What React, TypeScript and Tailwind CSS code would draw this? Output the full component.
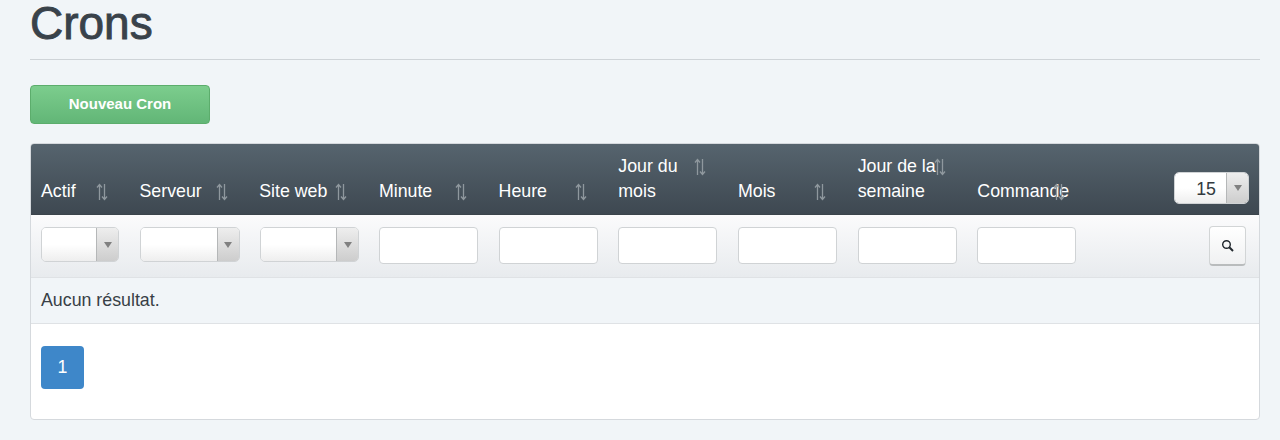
const columns = [
  { label: "Actif", select: "w-[78px]", first: true },
  { label: "Serveur", select: "w-[100px]" },
  { label: "Site web", select: "w-[99px] ml-[1px]" },
  { label: "Minute" },
  { label: "Heure" },
  { label: "Jour du mois", top: true },
  { label: "Mois" },
  { label: "Jour de la semaine", top: true },
  { label: "Commande" },
];

function SortIcon({ top, first }: { top?: boolean; first?: boolean }) {
  return (
    <svg
      className={`absolute ${first ? "left-[55px]" : "left-[76px]"} ${top ? "top-[14px]" : "top-[39px]"}`}
      width="12"
      height="18"
      viewBox="0 0 12 18"
      fill="none"
      stroke="#8f989e"
      strokeWidth="1.3"
    >
      <path d="M3.5 17V1.5M1 4.5L3.5 1.5L6 4.5" />
      <path d="M8.5 1V16.5M6 13.5L8.5 16.5L11 13.5" />
    </svg>
  );
}

function Select({ className, value }: { className: string; value?: string }) {
  return (
    <div className={`flex overflow-hidden rounded-[5px] border border-[#d0d3d5] ${className}`}>
      <div className="flex-1 bg-gradient-to-b from-white from-50% to-[#eeeeee] pr-[10px] text-right text-[#333a40]">
        {value}
      </div>
      <div className="flex w-[22px] items-center justify-center border-l border-[#b5b7b8] bg-gradient-to-b from-[#eeeeee] to-[#cdcdcd]">
        <div className="h-0 w-0 border-x-[4px] border-t-[6px] border-x-transparent border-t-[#808080]" />
      </div>
    </div>
  );
}

export default function App() {
  return (
    <div className="h-[440px] overflow-hidden bg-[#f1f5f8] pr-[20px] pl-[30px] font-['Liberation_Sans',Arial,sans-serif] text-[#333c44]">
      <h1 className="h-[60px] border-b border-[#cfd4d8] text-[46px] leading-[46px] font-normal text-[#39424a] [-webkit-text-stroke:0.9px_#39424a]">
        Crons
      </h1>
      <button className="mt-[25px] block h-[39px] w-[180px] rounded-[4px] border border-[#5cad6c] bg-gradient-to-b from-[#7ccd8d] to-[#62b677] text-[15px] font-bold text-white">
        Nouveau Cron
      </button>
      <div className="mt-[19px] h-[277px] overflow-hidden rounded-[4px] border border-[#d5d9dd] bg-white">
        <div className="grid h-[71px] grid-cols-[98.5px_repeat(8,119.7px)_1fr] border-b border-[#3b444b] bg-gradient-to-b from-[#56646e] to-[#3e4851] pl-[10px] text-[17.8px] leading-[25px] text-white">
          {columns.map((c) => (
            <div key={c.label} className="relative flex items-end pr-[18px] pb-[10px]">
              <div>{c.label}</div>
              <SortIcon top={c.top} first={c.first} />
            </div>
          ))}
          <div className="flex justify-end pt-[28px] pr-[10px]">
            <Select className="h-[32px] w-[75px] text-[17.8px] leading-[32px]" value="15" />
          </div>
        </div>
        <div className="grid h-[63px] grid-cols-[98.5px_repeat(8,119.7px)_1fr] border-b border-[#dfe2e5] bg-gradient-to-b from-[#fbfbfc] to-[#e8ebee] pl-[10px]">
          {columns.map((c) => (
            <div key={c.label} className="pt-[12px]">
              {c.select ? (
                <Select className={`h-[35px] ${c.select}`} />
              ) : (
                <input className="block h-[37px] w-[99px] rounded-[4px] border border-[#d0d3d5] bg-white" />
              )}
            </div>
          ))}
          <div className="flex justify-end pt-[11px] pr-[13px]">
            <button className="flex h-[40px] w-[37px] items-center justify-center rounded-[4px] border border-b-2 border-[#d2d5d6] border-b-[#b9bcbd] bg-gradient-to-b from-white to-[#f0f1f2]">
              <svg width="13" height="13" viewBox="0 0 13 13" fill="none" stroke="#22292f" strokeWidth="1.4">
                <circle cx="5.5" cy="5.5" r="3.8" />
                <path d="M8.3 8.3L12 12" strokeWidth="2" />
              </svg>
            </button>
          </div>
        </div>
        <div className="h-[46px] border-b border-[#dfe2e5] bg-[#f1f5f8] pl-[10px] text-[17.8px] leading-[45px] text-[#383f46]">
          Aucun résultat.
        </div>
        <div className="pt-[22px] pl-[10px]">
          <div className="flex h-[43px] w-[43px] items-center justify-center rounded-[4px] bg-[#3e87c9] text-[17.8px] text-white">
            1
          </div>
        </div>
      </div>
    </div>
  );
}
